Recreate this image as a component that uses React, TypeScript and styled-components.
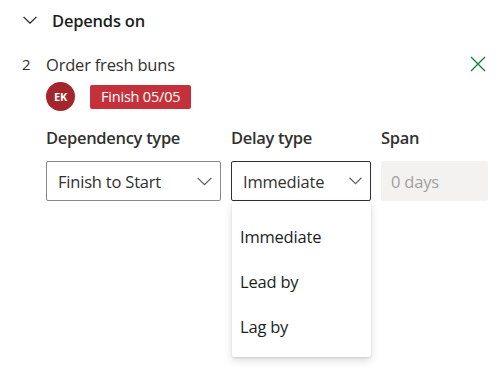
import React from "react";
import styled, { createGlobalStyle } from "styled-components";

const Global = createGlobalStyle`
  html, body { margin: 0; padding: 0; background: #ffffff; }
  body { font-family: "Open Sans", "Noto Sans", sans-serif; color: #323130; }
`;

const Page = styled.div`
  width: 504px;
  height: 378px;
  position: relative;
  overflow: hidden;
  box-sizing: border-box;
  padding: 8px 0 0 0;
`;

const Header = styled.div`
  display: flex;
  align-items: center;
  gap: 15px;
  padding-left: 23px;
  height: 24px;
`;

const HeaderTitle = styled.div`
  font-size: 16.5px;
  font-weight: 600;
  color: #201f1e;
  letter-spacing: -0.2px;
`;

const DepRow = styled.div`
  display: flex;
  margin-top: 21px;
  padding: 0 16px 0 22px;
`;

const Index = styled.div`
  width: 24px;
  flex-shrink: 0;
  font-size: 15px;
  line-height: 22px;
  color: #323130;
`;

const DepBody = styled.div`
  flex: 1;
  display: flex;
  flex-direction: column;
`;

const TitleLine = styled.div`
  display: flex;
  justify-content: space-between;
  align-items: center;
  height: 22px;
  padding-right: 2px;
`;

const TaskName = styled.div`
  font-size: 16.5px;
  color: #323130;
  letter-spacing: -0.2px;
`;

const CloseButton = styled.button`
  border: none;
  background: none;
  padding: 0;
  width: 16px;
  height: 16px;
  display: flex;
  align-items: center;
  justify-content: center;
  cursor: pointer;
`;

const MetaLine = styled.div`
  display: flex;
  align-items: center;
  gap: 15px;
  margin-top: 7px;
`;

const Avatar = styled.div`
  width: 29px;
  height: 29px;
  border-radius: 50%;
  background: #a4262c;
  color: #fff;
  font-size: 11px;
  font-weight: 700;
  display: flex;
  align-items: center;
  justify-content: center;
  letter-spacing: -0.3px;
`;

const Badge = styled.div`
  height: 24px;
  padding: 0 11px;
  background: #c4313b;
  color: #fff;
  border-radius: 2px;
  font-size: 14.5px;
  display: flex;
  align-items: center;
  letter-spacing: -0.2px;
`;

const Fields = styled.div`
  display: grid;
  grid-template-columns: 175px 140px 107px;
  column-gap: 10px;
  margin-top: 14px;
  position: relative;
`;

const Field = styled.div`
  display: flex;
  flex-direction: column;
  gap: 10px;
  position: relative;
`;

const Label = styled.div`
  font-size: 16.5px;
  font-weight: 600;
  color: #323130;
  height: 26px;
  line-height: 26px;
  letter-spacing: -0.3px;
`;

const Select = styled.div<{ $active?: boolean }>`
  box-sizing: border-box;
  height: 40px;
  border: 1px solid ${(p) => (p.$active ? "#323130" : "#8a8886")};
  border-radius: 2px;
  display: flex;
  align-items: center;
  justify-content: space-between;
  padding: 0 8px 0 11px;
  font-size: 16.5px;
  color: #323130;
  letter-spacing: -0.2px;
`;

const Disabled = styled.div`
  box-sizing: border-box;
  height: 40px;
  border-radius: 2px;
  background: #f3f2f1;
  display: flex;
  align-items: center;
  padding: 0 10px;
  font-size: 16.5px;
  color: #a19f9d;
  letter-spacing: -0.2px;
`;

const Menu = styled.div`
  position: absolute;
  left: 1px;
  top: 76px;
  width: 139px;
  height: 156px;
  background: #fff;
  box-shadow: 0 4px 9px rgba(0, 0, 0, 0.13), 0 1px 2px rgba(0, 0, 0, 0.11);
  border-radius: 2px;
  padding-top: 13px;
  box-sizing: border-box;
  display: flex;
  flex-direction: column;
`;

const MenuItem = styled.div`
  height: 45px;
  display: flex;
  align-items: center;
  padding-left: 8px;
  font-size: 16.5px;
  color: #201f1e;
  letter-spacing: -0.2px;
`;

const Chevron = ({ size = 14, color = "#323130" }: { size?: number; color?: string }) => (
  <svg width={size} height={size * 0.6} viewBox="0 0 14 8.4" fill="none">
    <path d="M0.6 0.8 L7 7.2 L13.4 0.8" stroke={color} strokeWidth="1.2" />
  </svg>
);

export default function App() {
  return (
    <>
      <Global />
      <Page>
        <Header>
          <Chevron size={14} color="#201f1e" />
          <HeaderTitle>Depends on</HeaderTitle>
        </Header>
        <DepRow>
          <Index>2</Index>
          <DepBody>
            <TitleLine>
              <TaskName>Order fresh buns</TaskName>
              <CloseButton aria-label="Remove">
                <svg width="16" height="16" viewBox="0 0 16 16">
                  <path d="M1 1 L15 15 M15 1 L1 15" stroke="#107c41" strokeWidth="1.3" />
                </svg>
              </CloseButton>
            </TitleLine>
            <MetaLine>
              <Avatar>EK</Avatar>
              <Badge>Finish 05/05</Badge>
            </MetaLine>
            <Fields>
              <Field>
                <Label>Dependency type</Label>
                <Select>
                  Finish to Start
                  <Chevron size={15} color="#605e5c" />
                </Select>
              </Field>
              <Field>
                <Label>Delay type</Label>
                <Select $active>
                  Immediate
                  <Chevron size={13} color="#605e5c" />
                </Select>
                <Menu>
                  <MenuItem>Immediate</MenuItem>
                  <MenuItem>Lead by</MenuItem>
                  <MenuItem>Lag by</MenuItem>
                </Menu>
              </Field>
              <Field>
                <Label>Span</Label>
                <Disabled>0 days</Disabled>
              </Field>
            </Fields>
          </DepBody>
        </DepRow>
      </Page>
    </>
  );
}
